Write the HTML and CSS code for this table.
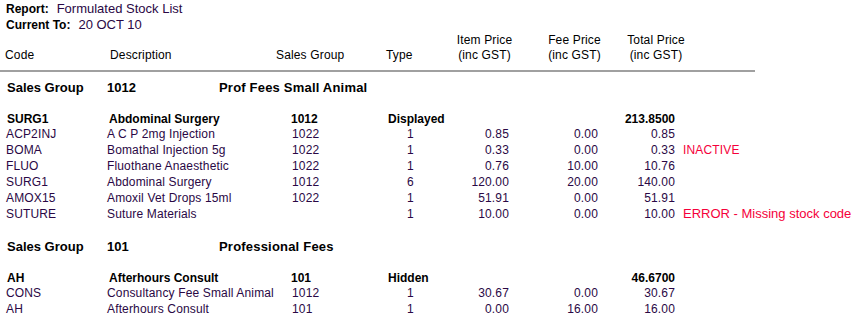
FILE: index.html
```html
<!DOCTYPE html>
<html>
<head>
<meta charset="utf-8">
<link rel="stylesheet" href="styles.css">
</head>
<body>
<div class="report">
  <div class="meta">
    <div class="meta-line"><span class="meta-label">Report:</span><span class="meta-value v1">Formulated Stock List</span></div>
    <div class="meta-line"><span class="meta-label">Current To:</span><span class="meta-value v2">20 OCT 10</span></div>
  </div>

  <div class="head">
    <div class="h-code">Code</div>
    <div class="h-desc">Description</div>
    <div class="h-group">Sales Group</div>
    <div class="h-type">Type</div>
    <div class="h-price">Item Price<br>(inc GST)</div>
    <div class="h-price">Fee Price<br>(inc GST)</div>
    <div class="h-price">Total Price<br>(inc GST)</div>
  </div>
  <div class="rule"></div>

  <section class="group first">
    <div class="group-row"><span>Sales Group</span><span>1012</span><span class="group-name">Prof Fees Small Animal</span></div>
    <div class="item-row"><span>SURG1</span><span>Abdominal Surgery</span><span>1012</span><span>Displayed</span><span></span><span class="num">213.8500</span></div>
    <div class="data-row"><span>ACP2INJ</span><span>A C P 2mg Injection</span><span>1022</span><span class="ctr">1</span><span class="num">0.85</span><span class="num">0.00</span><span class="num">0.85</span><span class="status"></span></div>
    <div class="data-row"><span>BOMA</span><span>Bomathal Injection 5g</span><span>1022</span><span class="ctr">1</span><span class="num">0.33</span><span class="num">0.00</span><span class="num">0.33</span><span class="status">INACTIVE</span></div>
    <div class="data-row"><span>FLUO</span><span>Fluothane Anaesthetic</span><span>1022</span><span class="ctr">1</span><span class="num">0.76</span><span class="num">10.00</span><span class="num">10.76</span><span class="status"></span></div>
    <div class="data-row"><span>SURG1</span><span>Abdominal Surgery</span><span>1012</span><span class="ctr">6</span><span class="num">120.00</span><span class="num">20.00</span><span class="num">140.00</span><span class="status"></span></div>
    <div class="data-row"><span>AMOX15</span><span>Amoxil Vet Drops 15ml</span><span>1022</span><span class="ctr">1</span><span class="num">51.91</span><span class="num">0.00</span><span class="num">51.91</span><span class="status"></span></div>
    <div class="data-row"><span>SUTURE</span><span>Suture Materials</span><span></span><span class="ctr">1</span><span class="num">10.00</span><span class="num">0.00</span><span class="num">10.00</span><span class="status status-error">ERROR - Missing stock code</span></div>
  </section>

  <section class="group">
    <div class="group-row"><span>Sales Group</span><span>101</span><span class="group-name">Professional Fees</span></div>
    <div class="item-row"><span>AH</span><span>Afterhours Consult</span><span>101</span><span>Hidden</span><span></span><span class="num">46.6700</span></div>
    <div class="data-row"><span>CONS</span><span>Consultancy Fee Small Animal</span><span>1012</span><span class="ctr">1</span><span class="num">30.67</span><span class="num">0.00</span><span class="num">30.67</span><span class="status"></span></div>
    <div class="data-row"><span>AH</span><span>Afterhours Consult</span><span>101</span><span class="ctr">1</span><span class="num">0.00</span><span class="num">16.00</span><span class="num">16.00</span><span class="status"></span></div>
  </section>
</div>
</body>
</html>
```

FILE: styles.css
```css
html, body {
  margin: 0;
  padding: 0;
  background: #ffffff;
}

body {
  font-family: "Liberation Sans", Arial, sans-serif;
  font-size: 12px;
  color: #000000;
}

.report {
  padding-top: 1px;
}

.meta {
  padding-left: 6px;
}

.meta-line {
  height: 16px;
  line-height: 16px;
  white-space: nowrap;
}

.meta-label {
  font-weight: bold;
  color: #000000;
}

.meta-value {
  font-size: 13px;
  color: #2a0845;
}

.v1 { margin-left: 8px; }
.v2 { margin-left: 8px; }

.head {
  display: grid;
  grid-template-columns: 105px 166px 110px 54px 89px 91px 72px;
  padding-left: 5px;
  line-height: 15px;
  height: 30px;
  align-items: end;
  color: #000000;
  letter-spacing: 0.15px;
  white-space: nowrap;
}

.h-price {
  text-align: center;
}

.rule {
  width: 755px;
  height: 2px;
  background: #a0a0a0;
  margin-top: 7px;
}

.group {
  margin-top: 17px;
}

.group.first {
  margin-top: 8px;
}

.group-row {
  display: grid;
  grid-template-columns: 100px 112px auto;
  padding-left: 7px;
  height: 16px;
  line-height: 16px;
  font-size: 13px;
  font-weight: bold;
  color: #000000;
  margin-bottom: 15px;
  white-space: nowrap;
}

.group-name {
  letter-spacing: 0.2px;
}

.item-row {
  display: grid;
  grid-template-columns: 102px 182px 97px 121px 89px 77px;
  padding-left: 7px;
  height: 15px;
  line-height: 16px;
  font-weight: bold;
  color: #000000;
  white-space: nowrap;
}

.data-row {
  display: grid;
  grid-template-columns: 101px 185px 94px 49px 74px 89px 77px auto;
  padding-left: 6px;
  height: 16px;
  line-height: 16px;
  color: #2a0845;
  letter-spacing: 0.15px;
  white-space: nowrap;
}

.num {
  text-align: right;
}

.ctr {
  text-align: center;
}

.status {
  padding-left: 8px;
  color: #f5003a;
}

.status-error {
  font-size: 13px;
  letter-spacing: 0;
}
```
